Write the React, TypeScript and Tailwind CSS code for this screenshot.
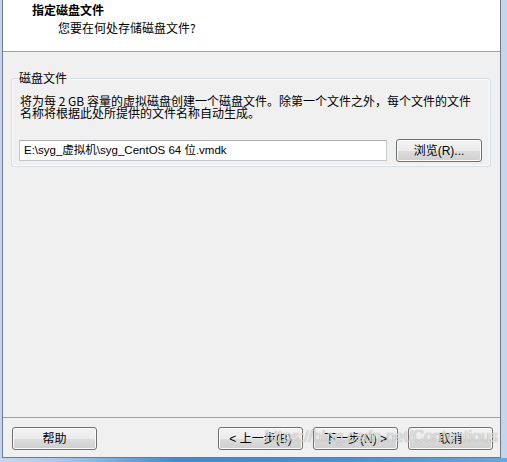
import React from "react";

const cjk = "font-['Noto_Sans_CJK_SC','Noto_Sans',sans-serif]";
const mixed = "font-['Liberation_Sans','Noto_Sans_CJK_SC',sans-serif]";

function WinButton({ children, className = "" }: { children: React.ReactNode; className?: string }) {
  return (
    <div
      className={`h-[23px] w-[85px] rounded-[3px] border border-[#707070] bg-[linear-gradient(to_bottom,#f3f3f3_0%,#ebebeb_50%,#dddddd_50%,#cfcfcf_100%)] shadow-[inset_0_0_0_1px_#fbfbfb] flex items-center justify-center text-[12px] leading-[14px] text-black ${mixed} ${className}`}
    >
      {children}
    </div>
  );
}

export default function App() {
  return (
    <div className="relative w-[507px] h-[462px] flex flex-col bg-[#c4d6ee] overflow-hidden">
      <div className="flex pl-[2px] pr-[6px]">
        <div className="w-[499px] h-[458px] flex flex-col border-l border-r border-b border-[#6e7a88] bg-[#f0f0f0]">
          {/* header */}
          <div className="h-[52px] bg-white border-b border-[#a0a0a0] flex flex-col">
            <div className={`mt-[2px] pl-[29px] text-[12px] leading-[16px] font-bold text-black ${cjk}`}>指定磁盘文件</div>
            <div className={`mt-[2px] pl-[55px] text-[12px] leading-[16px] text-black ${cjk}`}>您要在何处存储磁盘文件?</div>
          </div>
          {/* body */}
          <div className="flex-1 flex flex-col">
            <div className="relative mt-[26px] ml-[8px] w-[480px] h-[89px] rounded-[3px] border border-[#d5dfe5] shadow-[inset_0_0_0_1px_#fafafa]">
              <div className={`absolute left-[6px] top-[-9px] px-[1px] bg-[#f0f0f0] text-[12px] leading-[16px] text-black ${cjk}`}>磁盘文件</div>
              <div className={`pt-[16px] pl-[8px] text-[12px] leading-[12px] text-black ${cjk}`}>
                <div>将为每 2 GB 容量的虚拟磁盘创建一个磁盘文件。除第一个文件之外，每个文件的文件</div>
                <div>名称将根据此处所提供的文件名称自动生成。</div>
              </div>
              <div className="mt-[20px] pl-[7px] flex items-center">
                <div className={`w-[368px] h-[21px] bg-white border border-[#c3c7ce] border-t-[#abadb3] flex items-center pl-[4px] text-[11.5px] text-black ${mixed}`}>
                  E:\syg_虚拟机\syg_CentOS 64 位.vmdk
                </div>
                <WinButton className="ml-[9px] w-[86px]">浏览(R)...</WinButton>
              </div>
            </div>
            <div className="flex-1" />
            <div className="h-px bg-[#a0a0a0]" />
            <div className="mt-[9px] mb-[7px] pl-[9px] pr-[7px] flex items-center">
              <WinButton>帮助</WinButton>
              <div className="flex-1" />
              <WinButton>&lt; 上一步(B)</WinButton>
              <WinButton className="ml-[10px]">下一步(N) &gt;</WinButton>
              <WinButton className="ml-[10px]">取消</WinButton>
            </div>
          </div>
        </div>
      </div>
      <div className="h-[4px] bg-[linear-gradient(to_right,#c6d8ef_0%,#a9c8ea_12%,#3f8acb_35%,#4a92cf_70%,#6aa6da_100%)]" />
      <div className="absolute left-[265px] top-[427px] text-[16px] leading-[20px] font-['Liberation_Sans',sans-serif] text-white/70 [text-shadow:0_0_1px_rgba(90,90,90,0.7)] pointer-events-none">
        https://blog.csdn.net/Contentious
      </div>
    </div>
  );
}
